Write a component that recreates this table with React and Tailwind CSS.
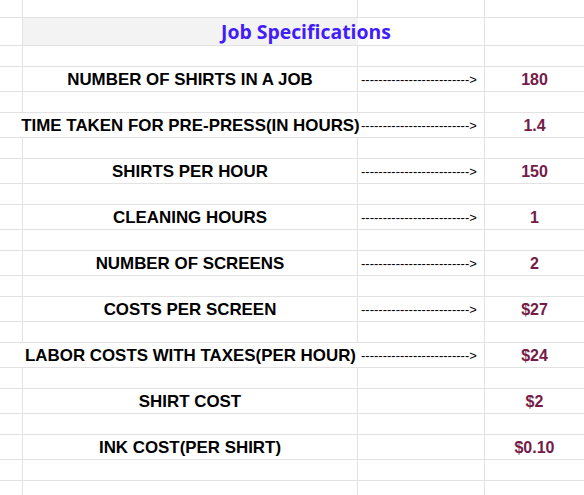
import React from "react";

const ARROW = "-".repeat(25) + ">";

const specs = [
  { label: "NUMBER OF SHIRTS IN A JOB", arrow: true, value: "180" },
  { label: "TIME TAKEN FOR PRE-PRESS(IN HOURS)", arrow: true, value: "1.4", wide: true },
  { label: "SHIRTS PER HOUR", arrow: true, value: "150" },
  { label: "CLEANING HOURS", arrow: true, value: "1" },
  { label: "NUMBER OF SCREENS", arrow: true, value: "2" },
  { label: "COSTS PER SCREEN", arrow: true, value: "$27" },
  { label: "LABOR COSTS WITH TAXES(PER HOUR)", arrow: true, value: "$24", wide: true },
  { label: "SHIRT COST", arrow: false, value: "$2" },
  { label: "INK COST(PER SHIRT)", arrow: false, value: "$0.10" },
];

const cell = "border-b border-r border-[#e2e2e2]";

function EmptyRow({ h }) {
  return (
    <>
      <div className={`${cell} ${h}`} />
      <div className={`${cell} ${h}`} />
      <div className={`${cell} ${h}`} />
      <div className={`border-b border-[#e2e2e2] ${h}`} />
    </>
  );
}

function SpecRow({ spec }) {
  return (
    <>
      {/* col A: border hidden when the label spills over */}
      <div className={`h-[25px] border-b border-[#e2e2e2] ${spec.wide ? "" : "border-r"}`} />
      <div
        className={`h-[25px] pt-px border-b border-[#e2e2e2] flex items-center justify-center whitespace-nowrap overflow-visible text-[16.9px] font-bold text-black ${
          spec.wide ? "" : "border-r"
        }`}
      >
        {spec.label}
      </div>
      <div className={`${cell} h-[25px] pt-px flex items-center pl-[3px] whitespace-nowrap text-[13px] text-black`}>
        {spec.arrow ? ARROW : ""}
      </div>
      <div className="h-[25px] pt-px border-b border-[#e2e2e2] flex items-center justify-center text-[16px] font-bold text-[#741b47]">
        {spec.value}
      </div>
    </>
  );
}

export default function App() {
  return (
    <div
      className="w-[584px] h-[495px] overflow-hidden bg-white"
      style={{ fontFamily: '"Liberation Sans", Arial, sans-serif' }}
    >
      <div className="grid grid-cols-[23px_335px_127px_1fr]">
        <EmptyRow h="h-[18px]" />

        {/* TITLE ROW */}
        <div className={`${cell} h-[28px]`} />
        <div className="h-[28px] border-b border-[#e2e2e2] bg-[#f3f3f3] flex items-center pl-[198px] whitespace-nowrap overflow-visible">
          <span
            className="text-[19.4px] font-bold text-[#421cfa] leading-none"
            style={{ fontFamily: '"Open Sans", sans-serif' }}
          >
            Job Specifications
          </span>
        </div>
        <div className={`${cell} h-[28px]`} />
        <div className="h-[28px] border-b border-[#e2e2e2]" />

        {/* SPEC ROWS */}
        {specs.map((s) => (
          <React.Fragment key={s.label}>
            <EmptyRow h="h-[21px]" />
            <SpecRow spec={s} />
          </React.Fragment>
        ))}

        <EmptyRow h="h-[21px]" />
        <EmptyRow h="h-[25px]" />
      </div>
    </div>
  );
}
